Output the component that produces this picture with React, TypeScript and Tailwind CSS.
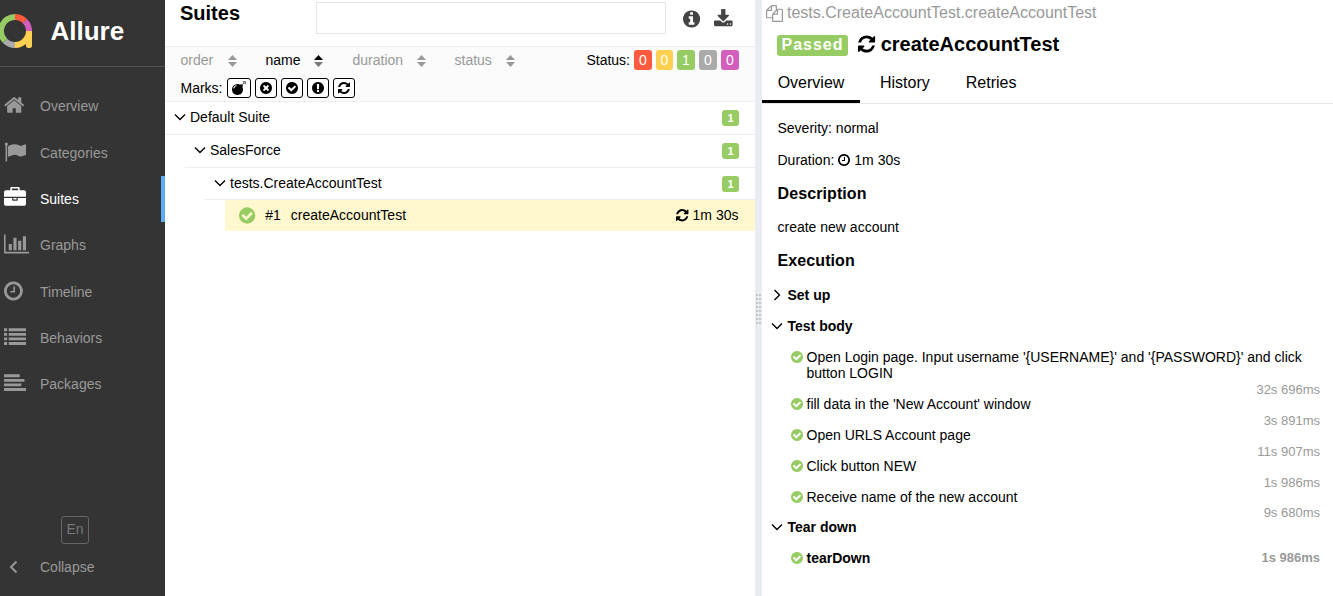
import React from "react";

const RING =
  "q0 209-103 385.5t-279.5 279.5-385.5 103-385.5-103-279.5-279.5-103-385.5 103-385.5 279.5-279.5 385.5-103 385.5 103 279.5 279.5 103 385.5z";

type Glyph = { x: number; w: number; d: string };

const glyphs = {
  home: { x: 64, w: 1664, d: "M1472 992v480q0 26-19 45t-45 19h-384v-384h-256v384h-384q-26 0-45-19t-19-45v-480q0-1 .5-3t.5-3l575-474 575 474q1 2 1 6zm223-69l-62 74q-8 9-21 11h-3q-13 0-21-7l-692-577-692 577q-12 8-24 7-13-2-21-11l-62-74q-8-10-7-23.5t11-21.5l719-599q32-26 76-26t76 26l244 204v-195q0-14 9-23t23-9h192q14 0 23 9t9 23v408l219 182q10 8 11 21.5t-7 23.5z" },
  flag: { x: 0, w: 1792, d: "M320 256q0 72-64 110v1266q0 13-9.5 22.5t-22.5 9.5h-64q-13 0-22.5-9.5t-9.5-22.5v-1266q-64-38-64-110 0-53 37.5-90.5t90.5-37.5 90.5 37.5 37.5 90.5zm1472 64v763q0 25-12.5 38.5t-39.5 27.5q-215 116-369 116-61 0-123.5-22t-108.5-48-115.5-48-142.5-22q-192 0-464 146-17 9-33 9-26 0-45-19t-19-45v-742q0-32 31-55 21-14 79-43 236-120 421-120 107 0 200 29t219 88q38 19 88 19 54 0 117.5-21t110-47 88-47 54.5-21q26 0 45 19t19 45z" },
  briefcase: { x: 0, w: 1792, d: "M640 256h512v-128h-512v128zm1152 640v480q0 66-47 113t-113 47h-1472q-66 0-113-47t-47-113v-480h672v160q0 26 19 45t45 19h320q26 0 45-19t19-45v-160h672zm-768 0v128h-256v-128h256zm768-480v384h-1792v-384q0-66 47-113t113-47h352v-160q0-40 28-68t68-28h576q40 0 68 28t28 68v160h352q66 0 113 47t47 113z" },
  chart: { x: 0, w: 2048, d: "M640 896v512h-256v-512h256zm384-512v1024h-256v-1024h256zm1024 1152v128h-2048v-1536h128v1408h1920zm-640-896v768h-256v-768h256zm384-384v1152h-256v-1152h256z" },
  clock: { x: 128, w: 1536, d: "M1024 544v448q0 14-9 23t-23 9h-320q-14 0-23-9t-9-23v-64q0-14 9-23t23-9h224v-352q0-14 9-23t23-9h64q14 0 23 9t9 23zm416 352q0-148-73-273t-198-198-273-73-273 73-198 198-73 273 73 273 198 198 273 73 273-73 198-198 73-273zm224 0" + RING },
  list: { x: 0, w: 1792, d: "M0 1310h256v235h-256zM0 935h256v235h-256zM0 560h256v235h-256zM0 185h256v235h-256zM384 1310h1408v235h-1408zM384 935h1408v235h-1408zM384 560h1408v235h-1408zM384 185h1408v235h-1408z" },
  align: { x: 0, w: 1792, d: "M0 1310h1792v235h-1792zM0 935h1408v235h-1408zM0 560h1664v235h-1664zM0 185h1280v235h-1280z" },
  check: { x: 128, w: 1536, d: "M1412 734q0-28-18-46l-91-90q-19-19-45-19t-45 19l-408 407-226-226q-19-19-45-19t-45 19l-91 90q-18 18-18 46 0 27 18 45l362 362q19 19 45 19 27 0 46-19l543-543q18-18 18-45zm252 162" + RING },
  cross: { x: 128, w: 1536, d: "M1277 1122q0-26-19-45l-181-181 181-181q19-19 19-45 0-27-19-46l-90-90q-19-19-46-19-26 0-45 19l-181 181-181-181q-19-19-45-19-27 0-46 19l-90 90q-19 19-19 46 0 26 19 45l181 181-181 181q-19 19-19 45 0 27 19 46l90 90q19 19 46 19 26 0 45-19l181-181 181 181q19 19 45 19 27 0 46-19l90-90q19-19 19-46zm387-226" + RING },
  warn: { x: 128, w: 1536, d: "M896 128q209 0 385.5 103t279.5 279.5 103 385.5-103 385.5-279.5 279.5-385.5 103-385.5-103-279.5-279.5-103-385.5 103-385.5 279.5-279.5 385.5-103zm128 1247v-190q0-14-9-23.5t-22-9.5h-192q-13 0-23 10t-10 23v190q0 13 10 23t23 10h192q13 0 22-9.5t9-23.5zm-2-344l18-621q0-12-10-18-10-8-24-8h-220q-14 0-24 8-10 6-10 18l17 621q0 10 10 17.5t24 7.5h185q14 0 23.5-7.5t10.5-17.5z" },
  info: { x: 128, w: 1536, d: "M1152 1376v-160q0-14-9-23t-23-9h-96v-512q0-14-9-23t-23-9h-320q-14 0-23 9t-9 23v160q0 14 9 23t23 9h96v320h-96q-14 0-23 9t-9 23v160q0 14 9 23t23 9h448q14 0 23-9t9-23zm-128-896v-160q0-14-9-23t-23-9h-192q-14 0-23 9t-9 23v160q0 14 9 23t23 9h192q14 0 23-9t9-23zm640 416" + RING },
  refresh: { x: 128, w: 1536, d: "M1639 1056q0 5-1 7-64 268-268 434.5t-478 166.5q-146 0-282.5-55t-243.5-157l-129 129q-19 19-45 19t-45-19-19-45v-448q0-26 19-45t45-19h448q26 0 45 19t19 45-19 45l-137 137q71 66 161 102t187 36q134 0 250-65t186-179q11-17 53-117 8-23 30-23h192q13 0 22.5 9.5t9.5 22.5zm25-800v448q0 26-19 45t-45 19h-448q-26 0-45-19t-19-45 19-45l138-138q-148-137-349-137-134 0-250 65t-186 179q-11 17-53 117-8 23-30 23h-199q-13 0-22.5-9.5t-9.5-22.5v-7q65-268 270-434.5t480-166.5q146 0 284 55.5t245 156.5l130-129q19-19 45-19t45 19 19 45z" },
  download: { x: 64, w: 1664, d: "M1344 1344q0-26-19-45t-45-19-45 19-19 45 19 45 45 19 45-19 19-45zm256 0q0-26-19-45t-45-19-45 19-19 45 19 45 45 19 45-19 19-45zm128-224v320q0 40-28 68t-68 28h-1472q-40 0-68-28t-28-68v-320q0-40 28-68t68-28h465l135 136q58 56 136 56t136-56l136-136h464q40 0 68 28t28 68zm-325-569q17 41-14 70l-448 448q-18 19-45 19t-45-19l-448-448q-31-29-14-70 17-39 59-39h256v-448q0-26 19-45t45-19h256q26 0 45 19t19 45v448h256q42 0 59 39z" },
  files: { x: 0, w: 1792, d: "M1696 384q40 0 68 28t28 68v1216q0 40-28 68t-68 28h-960q-40 0-68-28t-28-68v-288h-544q-40 0-68-28t-28-68v-672q0-40 20-88t48-76l408-408q28-28 76-48t88-20h416q40 0 68 28t28 68v328q68-40 128-40h416zm-544 213l-299 299h299v-299zm-640-384l-299 299h299v-299zm196 647l316-316v-416h-384v416q0 40-28 68t-68 28h-416v640h512v-256q0-40 20-88t48-76zm956 804v-1152h-384v416q0 40-28 68t-68 28h-416v640h896z" },
  bomb: { x: 0, w: 1792, d: "M571 589q-10-25-34-35t-49 0q-108 44-191 127t-127 191q-10 25 0 49t35 34q13 5 24 5 42 0 60-40 34-84 98.5-148.5t148.5-98.5q25-11 35-35t0-49zm942-356l46 46-244 243 68 68q19 19 19 45.5t-19 45.5l-64 64q89 161 89 343 0 143-55.5 273.5t-150 225-225 150-273.5 55.5-273.5-55.5-225-150-150-225-55.5-273.5 55.5-273.5 150-225 225-150 273.5-55.5q182 0 343 89l64-64q19-19 45.5-19t45.5 19l68 68zm8-56q-10 10-22 10-13 0-23-10l-91-90q-9-10-9-23t9-23q10-9 23-9t23 9l90 91q10 9 10 22.5t-10 22.5zm230 230q-11 9-23 9t-23-9l-90-91q-10-9-10-22.5t10-22.5q9-10 22.5-10t22.5 10l91 90q9 10 9 23t-9 23zm41-183q0 14-9 23t-23 9h-96q-14 0-23-9t-9-23 9-23 23-9h96q14 0 23 9t9 23zm-192-192v96q0 14-9 23t-23 9-23-9-9-23v-96q0-14 9-23t23-9 23 9 9 23zm151 55l-91 90q-10 10-22 10-13 0-23-10-10-9-10-22.5t10-22.5l90-91q10-9 23-9t23 9q9 10 9 23t-9 23z" },
} satisfies Record<string, Glyph>;

function Icon({ name, size, className = "" }: { name: keyof typeof glyphs; size: number; className?: string }) {
  const g = glyphs[name];
  return (
    <svg
      className={"shrink-0 overflow-visible " + className}
      width={(g.w / 1792) * size}
      height={size}
      viewBox={`${g.x} 0 ${g.w} 1792`}
      fill="currentColor"
    >
      <path d={g.d} />
    </svg>
  );
}

function Arrow({ dir, className = "" }: { dir: "down" | "right" | "left"; className?: string }) {
  const d = { down: "M1 3.500l5 5 5-5", right: "M3.500 1l5 5-5 5", left: "M8.500 .5L3 6l5.500 5.500" }[dir];
  return (
    <svg className={"shrink-0 " + className} width="12" height="12" viewBox="0 0 12 12" fill="none" stroke="currentColor" strokeWidth={dir === "left" ? 2 : 1.4}>
      <path d={d} />
    </svg>
  );
}

function Logo() {
  return (
    <svg className="shrink-0" width="34" height="36" viewBox="0 0 34 36" fill="none" strokeWidth="6">
      <path stroke="#97cc64" d="M5.100 27.900A14 14 0 0 1 15 4" />
      <path stroke="#fd5a3e" d="M15 4a14 14 0 0 1 9.900 4.100" />
      <path stroke="#d35ebe" d="M24.900 8.100A14 14 0 0 1 29 18" />
      <path stroke="#aaa" d="M15 32A14 14 0 0 1 5.100 27.900" />
      <path stroke="#ffd050" d="M29 18A14 14 0 0 1 15 32" />
      <path fill="#ffd050" d="M26 18h6v14.500a2.500 2.500 0 0 1-2.500 2.500h-1a2.500 2.500 0 0 1-2.500-2.500z" />
    </svg>
  );
}

const nav: { label: string; icon: keyof typeof glyphs; active?: boolean }[] = [
  { label: "Overview", icon: "home" },
  { label: "Categories", icon: "flag" },
  { label: "Suites", icon: "briefcase", active: true },
  { label: "Graphs", icon: "chart" },
  { label: "Timeline", icon: "clock" },
  { label: "Behaviors", icon: "list" },
  { label: "Packages", icon: "align" },
];

function Sidebar() {
  return (
    <aside className="flex w-[165px] shrink-0 flex-col bg-[#343434] text-[#999]">
      <div className="flex h-[67px] items-start border-b border-[#535353] pt-[13px]">
        <Logo />
        <span className="ml-[16.5px] text-[26px] leading-9 font-bold text-white">Allure</span>
      </div>
      <nav className="flex flex-col pt-[16.2px]">
        {nav.map((n) => (
          <div
            key={n.label}
            className={
              "flex h-[46.33px] items-center border-r-4 pl-1 " +
              (n.active ? "border-[#5cacf5] text-white" : "border-transparent")
            }
          >
            <div className="flex w-9 pb-[2px]">
              <Icon name={n.icon} size={22} />
            </div>
            <span>{n.label}</span>
          </div>
        ))}
      </nav>
      <div className="mt-auto flex flex-col pb-[13px]">
        <div className="ml-[61px] flex h-7 w-7 items-center justify-center rounded-[3px] border border-[#666] pb-[2px] text-[#777]">En</div>
        <div className="mt-[7px] flex h-8 items-center pl-2">
          <Arrow dir="left" className="mr-5" />
          <span>Collapse</span>
        </div>
      </div>
    </aside>
  );
}

function Sorter({ label, width, active }: { label: string; width: string; active?: boolean }) {
  return (
    <div className={"flex shrink-0 items-center justify-between " + width + (active ? " text-black" : " text-[#999]")}>
      <span>{label}</span>
      <svg className="mt-px" width="9" height="12" viewBox="0 0 9 12">
        <path d="M0 5l4.500-5L9 5z" fill="currentColor" />
        <path d="M0 7l4.500 5L9 7z" fill={active ? "#777" : "currentColor"} />
      </svg>
    </div>
  );
}

const statuses = [
  { n: 0, c: "w-[18px] bg-[#fd5a3e]" },
  { n: 0, c: "w-[17px] bg-[#ffd050]" },
  { n: 1, c: "w-[18px] bg-[#97cc64]" },
  { n: 0, c: "w-[18px] bg-[#aaa]" },
  { n: 0, c: "w-[18px] bg-[#d35ebe]" },
];

const marks: { icon: keyof typeof glyphs; w: string }[] = [
  { icon: "bomb", w: "w-6" },
  { icon: "cross", w: "w-[22px]" },
  { icon: "check", w: "w-[22px]" },
  { icon: "warn", w: "w-[22px]" },
  { icon: "refresh", w: "w-[22px]" },
];

function SuiteRow({ label, indent }: { label: string; indent: string }) {
  return (
    <div className={"flex items-center border-b border-[#eceff1] pr-4 pl-[9px] " + indent}>
      <Arrow dir="down" className="mr-1 mb-[2px]" />
      <span className="pb-[2px]">{label}</span>
      <span className="ml-auto flex h-4 w-[17px] items-center justify-center rounded-[3px] bg-[#97cc64] text-[11px] font-bold text-white">1</span>
    </div>
  );
}

function SuitesPane() {
  return (
    <section className="flex w-[590px] shrink-0 flex-col">
      <div className="flex h-[46px] items-start">
        <h1 className="w-[151px] pl-[15px] text-[20px] leading-[26px] font-bold">Suites</h1>
        <div className="mt-[2px] h-8 w-[350px] border border-[#e5e5e5]" />
        <Icon name="info" size={20} className="mt-[9px] ml-[17px] text-[#444]" />
        <Icon name="download" size={20} className="mt-[9px] ml-[14px] text-[#444]" />
      </div>
      <div className="flex h-14 flex-col border-y border-[#eceff1] bg-[#fbfbfb] pl-[15.500px]">
        <div className="flex h-[26px] shrink-0 items-center">
          <Sorter label="order" width="w-[56px]" />
          <Sorter label="name" width="ml-[29px] w-[57.500px]" active />
          <Sorter label="duration" width="ml-[29.500px] w-[73px]" />
          <Sorter label="status" width="ml-[29px] w-[60px]" />
          <span className="mr-[4px] ml-auto">Status:</span>
          <div className="mr-4 flex gap-1">
            {statuses.map((s, i) => (
              <span key={i} className={"flex h-5 items-center justify-center rounded-[3px] text-white " + s.c}>{s.n}</span>
            ))}
          </div>
        </div>
        <div className="flex h-7 shrink-0 items-center pt-[2px]">
          <span className="mr-[4px]">Marks:</span>
          <div className="flex gap-1">
            {marks.map((m) => (
              <span key={m.icon} className={"flex h-5 items-center justify-center rounded-[3px] border border-black bg-white " + m.w}>
                <Icon name={m.icon} size={14} />
              </span>
            ))}
          </div>
        </div>
      </div>
      <SuiteRow label="Default Suite" indent="h-[33px]" />
      <SuiteRow label="SalesForce" indent="ml-5 h-[33px]" />
      <SuiteRow label="tests.CreateAccountTest" indent="ml-10 h-8" />
      <div className="ml-[60px] flex h-[31px] items-center bg-[#fff8ce] pr-[16.500px] pb-px pl-[14px]">
        <Icon name="check" size={19} className="text-[#97cc64]" />
        <span className="ml-[10px]">#1</span>
        <span className="ml-[10px]">createAccountTest</span>
        <Icon name="refresh" size={14.500} className="mr-1 ml-auto" />
        <span>1m 30s</span>
      </div>
    </section>
  );
}

function Splitter() {
  return (
    <div className="flex w-[7px] shrink-0 items-center justify-center bg-[#e9edf1] pt-[22px]">
      <div className="grid grid-cols-2 gap-x-px gap-y-[2px]">
        {Array.from({ length: 16 }, (_, i) => (
          <span key={i} className="h-[2px] w-[2px] bg-[#c4c6c8]" />
        ))}
      </div>
    </div>
  );
}

const steps = [
  { t: "Open Login page. Input username '{USERNAME}' and '{PASSWORD}' and click button LOGIN", d: "32s 696ms" },
  { t: "fill data in the 'New Account' window", d: "3s 891ms" },
  { t: "Open URLS Account page", d: "11s 907ms" },
  { t: "Click button NEW", d: "1s 986ms" },
  { t: "Receive name of the new account", d: "9s 680ms" },
];

function Stage({ label, dir, className }: { label: string; dir: "down" | "right"; className: string }) {
  return (
    <div className={"flex h-4 items-center pl-[9px] font-bold " + className}>
      <Arrow dir={dir} className="mr-[4.500px]" />
      <span>{label}</span>
    </div>
  );
}

function DetailPane() {
  return (
    <main className="flex min-w-0 flex-1 flex-col">
      <div className="flex h-[26px] items-center pl-1 text-[16px] text-[#999]">
        <Icon name="files" size={17} className="mr-1" />
        <span>tests.CreateAccountTest.createAccountTest</span>
      </div>
      <div className="flex h-9 items-center pl-[15px]">
        <span className="mt-[2px] flex h-[21px] w-[71px] items-center justify-center rounded-[3px] bg-[#97cc64] text-[16px] font-bold tracking-[1px] text-white">Passed</span>
        <Icon name="refresh" size={20} className="mr-[6px] ml-[9.500px]" />
        <h2 className="text-[20px] font-bold">createAccountTest</h2>
      </div>
      <div className="flex h-[42px] border-b border-[#e5e5e5] text-[16px]">
        <span className="flex w-[98px] justify-center border-b-[3px] border-black pt-[13px]">Overview</span>
        <span className="ml-5 pt-[13px]">History</span>
        <span className="ml-[36px] pt-[13px]">Retries</span>
      </div>
      <div className="flex flex-col pl-[15.500px]">
        <p className="mt-4 leading-4">Severity: normal</p>
        <p className="mt-4 flex h-4 items-center">
          Duration:
          <Icon name="clock" size={14} className="mx-1" />
          1m 30s
        </p>
        <h3 className="mt-[16px] text-[16px] leading-5 font-bold tracking-[0.1px]">Description</h3>
        <p className="mt-[15px] leading-4">create new account</p>
        <h3 className="mt-[16px] text-[16px] leading-5 font-bold tracking-[0.1px]">Execution</h3>
      </div>
      <Stage label="Set up" dir="right" className="mt-[16px]" />
      <Stage label="Test body" dir="down" className="mt-[15px]" />
      <ul className="mt-[15px] flex flex-col pr-[13px] pl-[29px]">
        {steps.map((s) => (
          <li key={s.t} className="group flex flex-col">
            <div className="flex items-start">
              <Icon name="check" size={14} className="mt-px mr-[3.500px] text-[#97cc64]" />
              <span className="w-[506px] leading-4">{s.t}</span>
            </div>
            <span className="self-end pt-[2px] text-[13px] leading-[13px] text-[#999] group-last:pt-px group-last:pb-px">{s.d}</span>
          </li>
        ))}
      </ul>
      <Stage label="Tear down" dir="down" className="-mt-px" />
      <div className="mt-[15px] flex items-center pr-[13px] pl-[29px] leading-4 font-bold">
        <Icon name="check" size={14} className="mr-[3.500px] text-[#97cc64]" />
        <span>tearDown</span>
        <span className="ml-auto text-[13px] text-[#999]">1s 986ms</span>
      </div>
    </main>
  );
}

export default function App() {
  return (
    <div className="flex h-[596px] w-[1333px] overflow-hidden bg-white font-['Liberation_Sans',Arial,sans-serif] text-[14px] leading-4 text-black">
      <Sidebar />
      <SuitesPane />
      <Splitter />
      <DetailPane />
    </div>
  );
}
